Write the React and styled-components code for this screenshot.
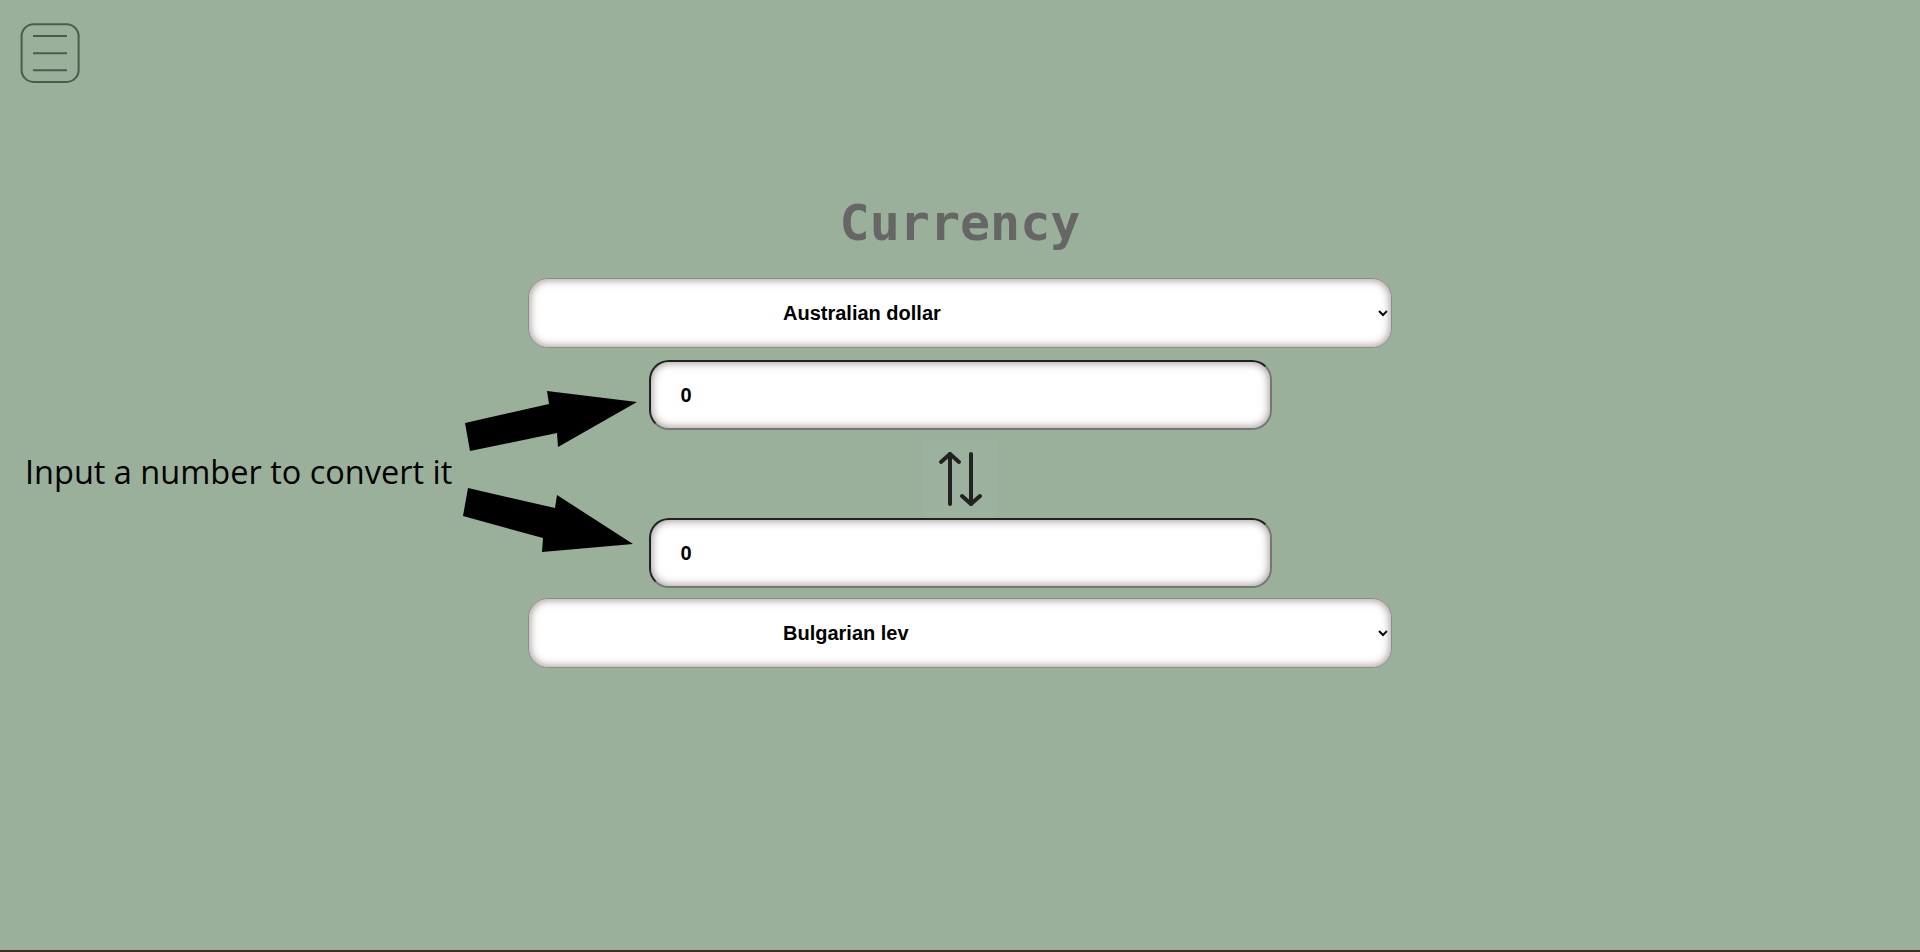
import { useState } from "react";
import styled, { createGlobalStyle } from "styled-components";

const GlobalStyle = createGlobalStyle`
  html {
    background-color: #3e2c28;
  }
  body {
    margin: 0;
    font-family: "Liberation Sans", Arial, sans-serif;
  }
`;

const Page = styled.div`
  position: relative;
  height: 950px;
  background-color: #9ab09b;
  padding: 23px 20px 0;
  box-sizing: border-box;
  overflow: hidden;
`;

const Header = styled.header`
  display: flex;
  height: 60px;
`;

const MenuButton = styled.button`
  width: 60px;
  height: 60px;
  padding: 0;
  border: 0;
  background: transparent;
  cursor: pointer;
  color: #4a5d4b;
`;

const Main = styled.main`
  display: flex;
  flex-direction: column;
  align-items: center;
`;

const Title = styled.h1`
  margin: 111px 0 26px;
  font-family: "DejaVu Sans Mono", "Liberation Mono", monospace;
  font-size: 50px;
  line-height: 58px;
  font-weight: 700;
  color: #666666;
`;

const CurrencySelect = styled.select`
  width: 864px;
  height: 70px;
  margin-bottom: ${(props) => props.$gap || 0}px;
  padding: 0 10px 0 250px;
  box-sizing: border-box;
  border: 1px solid #8c8c8c;
  border-radius: 20px;
  background-color: #ffffff;
  box-shadow: inset 0 0 8px 1px #a39797;
  font-family: "Liberation Sans", Arial, sans-serif;
  font-size: 20px;
  font-weight: 700;
  color: #000000;
  outline: none;
`;

const AmountInput = styled.input`
  width: 623px;
  height: 70px;
  margin-bottom: ${(props) => props.$gap || 0}px;
  padding: 0 20px 0 30px;
  box-sizing: border-box;
  border: 2px inset #767676;
  border-radius: 20px;
  background-color: #ffffff;
  box-shadow: inset 0 0 8px 1px #a39797;
  font-family: "Liberation Sans", Arial, sans-serif;
  font-size: 20px;
  font-weight: 700;
  color: #000000;
  outline: none;
`;

const SwapButton = styled.button`
  display: flex;
  align-items: center;
  justify-content: center;
  width: 74px;
  height: 78px;
  margin-top: 10px;
  padding: 0;
  border: 0;
  background-color: rgba(255, 255, 255, 0.03);
  color: #222222;
  cursor: pointer;
`;

const Callout = styled.div`
  position: absolute;
  left: 0;
  top: 0;
  pointer-events: none;
`;

const CalloutText = styled.p`
  position: absolute;
  left: 25px;
  top: 449px;
  margin: 0;
  white-space: nowrap;
  font-family: "Open Sans", "Noto Sans", sans-serif;
  font-size: 32.5px;
  color: #000000;
`;

const CalloutArrows = styled.svg`
  position: absolute;
  left: 455px;
  top: 385px;
`;

const currencies = [
  "Australian dollar",
  "Bulgarian lev",
  "Brazilian real",
  "Canadian dollar",
  "Swiss franc",
  "Chinese yuan",
  "Czech koruna",
  "Danish krone",
  "Euro",
  "Pound sterling",
  "Hong Kong dollar",
  "Hungarian forint",
  "Japanese yen",
  "US dollar",
];

function MenuIcon() {
  return (
    <svg width="60" height="60" viewBox="0 0 60 60" fill="none">
      <rect x="1.6" y="1.3" width="57" height="57.6" rx="12" stroke="currentColor" strokeWidth="2" />
      <path d="M13 13h34M13 30.3h34M13 47.3h34" stroke="currentColor" strokeWidth="2" />
    </svg>
  );
}

function SwapIcon() {
  return (
    <svg width="44" height="58" viewBox="0 0 44 58" fill="none">
      <g stroke="currentColor" strokeWidth="4" strokeLinecap="round" strokeLinejoin="round">
        <path d="M12 4v50" />
        <path d="M3 12l9-8 9 8" />
        <path d="M33 4v50" />
        <path d="M24 46l9 8 9-8" />
      </g>
    </svg>
  );
}

export default function App() {
  const [from, setFrom] = useState("Australian dollar");
  const [to, setTo] = useState("Bulgarian lev");
  const [amountFrom, setAmountFrom] = useState("0");
  const [amountTo, setAmountTo] = useState("0");

  const swap = () => {
    setFrom(to);
    setTo(from);
    setAmountFrom(amountTo);
    setAmountTo(amountFrom);
  };

  return (
    <Page>
      <GlobalStyle />
      <Header>
        <MenuButton aria-label="Menu">
          <MenuIcon />
        </MenuButton>
      </Header>
      <Main>
        <Title>Currency</Title>
        <CurrencySelect $gap={12} value={from} onChange={(e) => setFrom(e.target.value)}>
          {currencies.map((c) => (
            <option key={c}>{c}</option>
          ))}
        </CurrencySelect>
        <AmountInput value={amountFrom} onChange={(e) => setAmountFrom(e.target.value)} />
        <SwapButton onClick={swap} aria-label="Swap">
          <SwapIcon />
        </SwapButton>
        <AmountInput $gap={10} value={amountTo} onChange={(e) => setAmountTo(e.target.value)} />
        <CurrencySelect value={to} onChange={(e) => setTo(e.target.value)}>
          {currencies.map((c) => (
            <option key={c}>{c}</option>
          ))}
        </CurrencySelect>
      </Main>
      <Callout>
        <CalloutText>Input a number to convert it</CalloutText>
        <CalloutArrows width="190" height="175" viewBox="0 0 190 175">
          <polygon points="15,66 10,38 94,19 92,6 182,17 103,62 102,48" fill="#000" />
          <polygon points="13,103 100,123 102,110 178,159 87,167 88,153 8,131" fill="#000" />
        </CalloutArrows>
      </Callout>
    </Page>
  );
}
